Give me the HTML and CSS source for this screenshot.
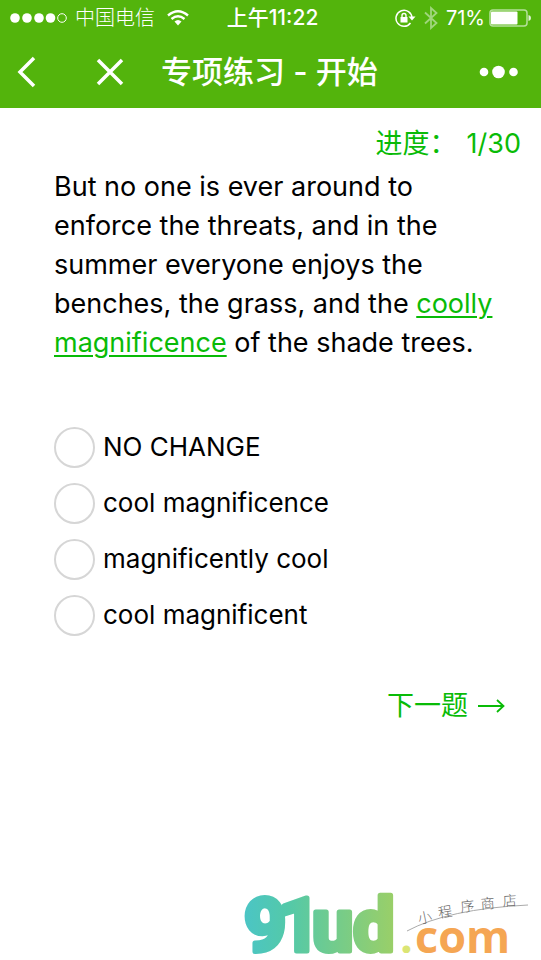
FILE: index.html
```html
<!DOCTYPE html>
<html lang="zh-CN">
<head>
<meta charset="utf-8">
<meta name="viewport" content="width=device-width, initial-scale=1">
<title>专项练习 - 开始</title>
<link rel="stylesheet" href="styles.css">
</head>
<body>
<header class="top">
  <div class="status">
    <div class="carrier">
      <svg width="57" height="12" viewBox="0 0 57 12" aria-hidden="true">
        <g fill="#fff"><circle cx="5" cy="6" r="4.8"/><circle cx="17" cy="6" r="4.8"/><circle cx="29" cy="6" r="4.8"/><circle cx="40.500" cy="6" r="4.8"/></g>
        <circle cx="52" cy="6" r="4.300" fill="none" stroke="#fff"/>
      </svg>
      <span>中国电信</span>
      <svg class="wifi" width="22" height="16" viewBox="0 0 22 16" fill="none" stroke="#fff" stroke-width="2.400" aria-hidden="true">
        <path d="M1 5.500Q11-3 21 5.500M4.500 9Q11 3.500 17.500 9"/>
        <path d="M7.500 11.500Q11 8.500 14.500 11.500L11 15.500Z" fill="#fff" stroke="none"/>
      </svg>
    </div>
    <time class="clock">上午11:22</time>
    <div class="power">
      <svg width="21" height="20" viewBox="0 0 21 20" aria-hidden="true">
        <path d="M15.500 15A8 8 0 1 1 17 10" fill="none" stroke="#fff" stroke-width="1.500"/>
        <path d="M13.500 8.500H20.500L17 12.500Z" fill="#fff"/>
        <rect x="5.500" y="9" width="7" height="5.500" fill="#fff"/>
        <path d="M7 9V7.500a2 2 0 0 1 4 0V9" fill="none" stroke="#fff" stroke-width="1.400"/>
      </svg>
      <svg width="14" height="24" viewBox="0 0 14 24" fill="none" stroke="#a0d67d" stroke-width="1.800" aria-hidden="true"><path d="M1 6.500L12.500 17L7 22V2L12.500 7L1 17.500"/></svg>
      <span>71%</span>
      <svg class="battery" width="42" height="18" viewBox="0 0 42 18" aria-hidden="true">
        <rect x="1" y="1" width="37" height="16" rx="3" fill="none" stroke="#b5df9b" stroke-width="1.500"/>
        <rect x="2" y="2.500" width="26.500" height="13" rx="1" fill="#fff"/>
        <path d="M39.500 6Q42 6.500 42 9T39.500 12Z" fill="#e3f3d9"/>
      </svg>
    </div>
  </div>
  <nav class="bar">
    <button class="icon" aria-label="返回"><svg width="20" height="32" viewBox="0 0 20 32"><path d="M17 2L3 16L17 30"/></svg></button>
    <button class="icon close" aria-label="关闭"><svg width="28" height="28" viewBox="0 0 28 28"><path d="M2 2L26 26M26 2L2 26"/></svg></button>
    <h1>专项练习 - 开始</h1>
    <button class="icon more" aria-label="更多"><svg width="40" height="14" viewBox="0 0 40 14"><circle cx="5" cy="7" r="4.300"/><circle cx="19.500" cy="7" r="6.300"/><circle cx="34.500" cy="7" r="4.300"/></svg></button>
  </nav>
</header>
<main>
  <p class="progress"><span>进度：</span><span>1/30</span></p>
  <form>
    <p class="question">But no one is ever around to enforce the threats, and in the summer everyone enjoys the benches, the grass, and the <u>coolly magnificence</u> of the shade trees.</p>
    <div class="options" role="radiogroup" aria-label="选项">
      <label><input type="radio" name="answer"><span>NO CHANGE</span></label>
      <label><input type="radio" name="answer"><span>cool magnificence</span></label>
      <label><input type="radio" name="answer"><span>magnificently cool</span></label>
      <label><input type="radio" name="answer"><span>cool magnificent</span></label>
    </div>
    <div class="actions"><button type="button" class="next"><span>下一题</span><svg width="27" height="14" viewBox="0 0 27 14" aria-hidden="true"><path d="M0 7H25M19 1L25.500 7L19 13"/></svg></button></div>
  </form>
</main>
<footer>
  <svg class="logo" width="288" height="72" viewBox="0 0 288 72" role="img" aria-label="91ud.com 小程序商店">
    <defs><linearGradient id="fade" gradientUnits="userSpaceOnUse" x1="4" y1="0" x2="154" y2="0"><stop offset="0" stop-color="#4bc5c5"/><stop offset=".3" stop-color="#54c9a8"/><stop offset="1" stop-color="#9acf68"/></linearGradient></defs>
    <g class="mark" fill="url(#fade)" stroke="url(#fade)"><text x="4 38 72 113" y="63">91ud</text></g>
    <text class="domain" x="160" y="65"><tspan fill="#dbe574">.</tspan><tspan x="175">com</tspan></text>
    <path d="M167 43Q208 21 288 17" fill="none" stroke="#aaa"/>
    <text class="script" x="179 199 221 241 263" y="36 30 24 21 18" rotate="-12 -9 -6 -4 -3">小程序商店</text>
  </svg>
</footer>
</body>
</html>
```
FILE: styles.css
```css
* { box-sizing: border-box; }
body {
  margin: 0;
  min-height: 100vh;
  display: flex;
  flex-direction: column;
  background: #fff;
  color: #000;
  font: 27px/39px Inter, "Noto Sans CJK SC", sans-serif;
}
button { padding: 0; border: 0; background: none; color: inherit; font: inherit; }
svg { display: block; flex: none; }
p { margin: 0; }
.top { height: 108px; background: #53b40c; color: #fff; }
.status {
  height: 36px;
  padding: 0 10px;
  display: grid;
  grid-template-columns: 1fr auto 1fr;
  align-items: center;
  font-size: 20px;
  line-height: 36px;
}
.carrier, .power { display: flex; align-items: center; gap: 8px; }
.carrier span { font-weight: 300; }
.wifi { margin-left: 4px; }
.clock { padding-left: 4px; font-size: 21px; font-weight: 500; }
.power { justify-content: flex-end; }
.battery { margin-left: -4px; }
.bar { height: 72px; padding: 0 22px 0 17px; display: flex; align-items: center; }
.icon { display: flex; fill: none; stroke: #fff; stroke-width: 3.5; }
.close { margin-left: 59px; }
.more { margin-left: auto; fill: #fff; stroke: none; }
h1 { margin: 0 0 0 37px; font-size: 31px; line-height: 44px; font-weight: 500; }
main { flex: 1; padding: 16px 20px 0 54px; }
.progress { display: flex; justify-content: flex-end; gap: 10px; color: #09bb07; }
.question { padding: 4px 24px 0 0; }
u { color: #09bb07; text-decoration-thickness: 2px; text-underline-offset: 3px; }
.options { margin-top: 65px; display: grid; gap: 16px; font-size: 26px; line-height: 39px; }
label { display: flex; align-items: flex-start; gap: 8px; height: 40px; }
input {
  appearance: none;
  width: 41px;
  height: 41px;
  flex: none;
  margin: 0;
  border: 2px solid #d6d6d6;
  border-radius: 50%;
}
input:checked { border-color: #09bb07; background: #09bb07; }
.actions { margin-top: 51px; padding-right: 16px; display: flex; justify-content: flex-end; }
.next { display: flex; align-items: center; gap: 10px; color: #09bb07; }
.next svg { fill: none; stroke: currentColor; stroke-width: 1.8; }
footer { display: flex; justify-content: flex-end; padding-right: 13px; }
.mark { font: 700 74px Roboto, sans-serif; stroke-width: 5px; stroke-linejoin: round; }
.domain { font: 700 45px "Open Sans", sans-serif; fill: #f5a653; }
.script { font: 300 14px "Noto Sans CJK SC", sans-serif; fill: #666; }
```
